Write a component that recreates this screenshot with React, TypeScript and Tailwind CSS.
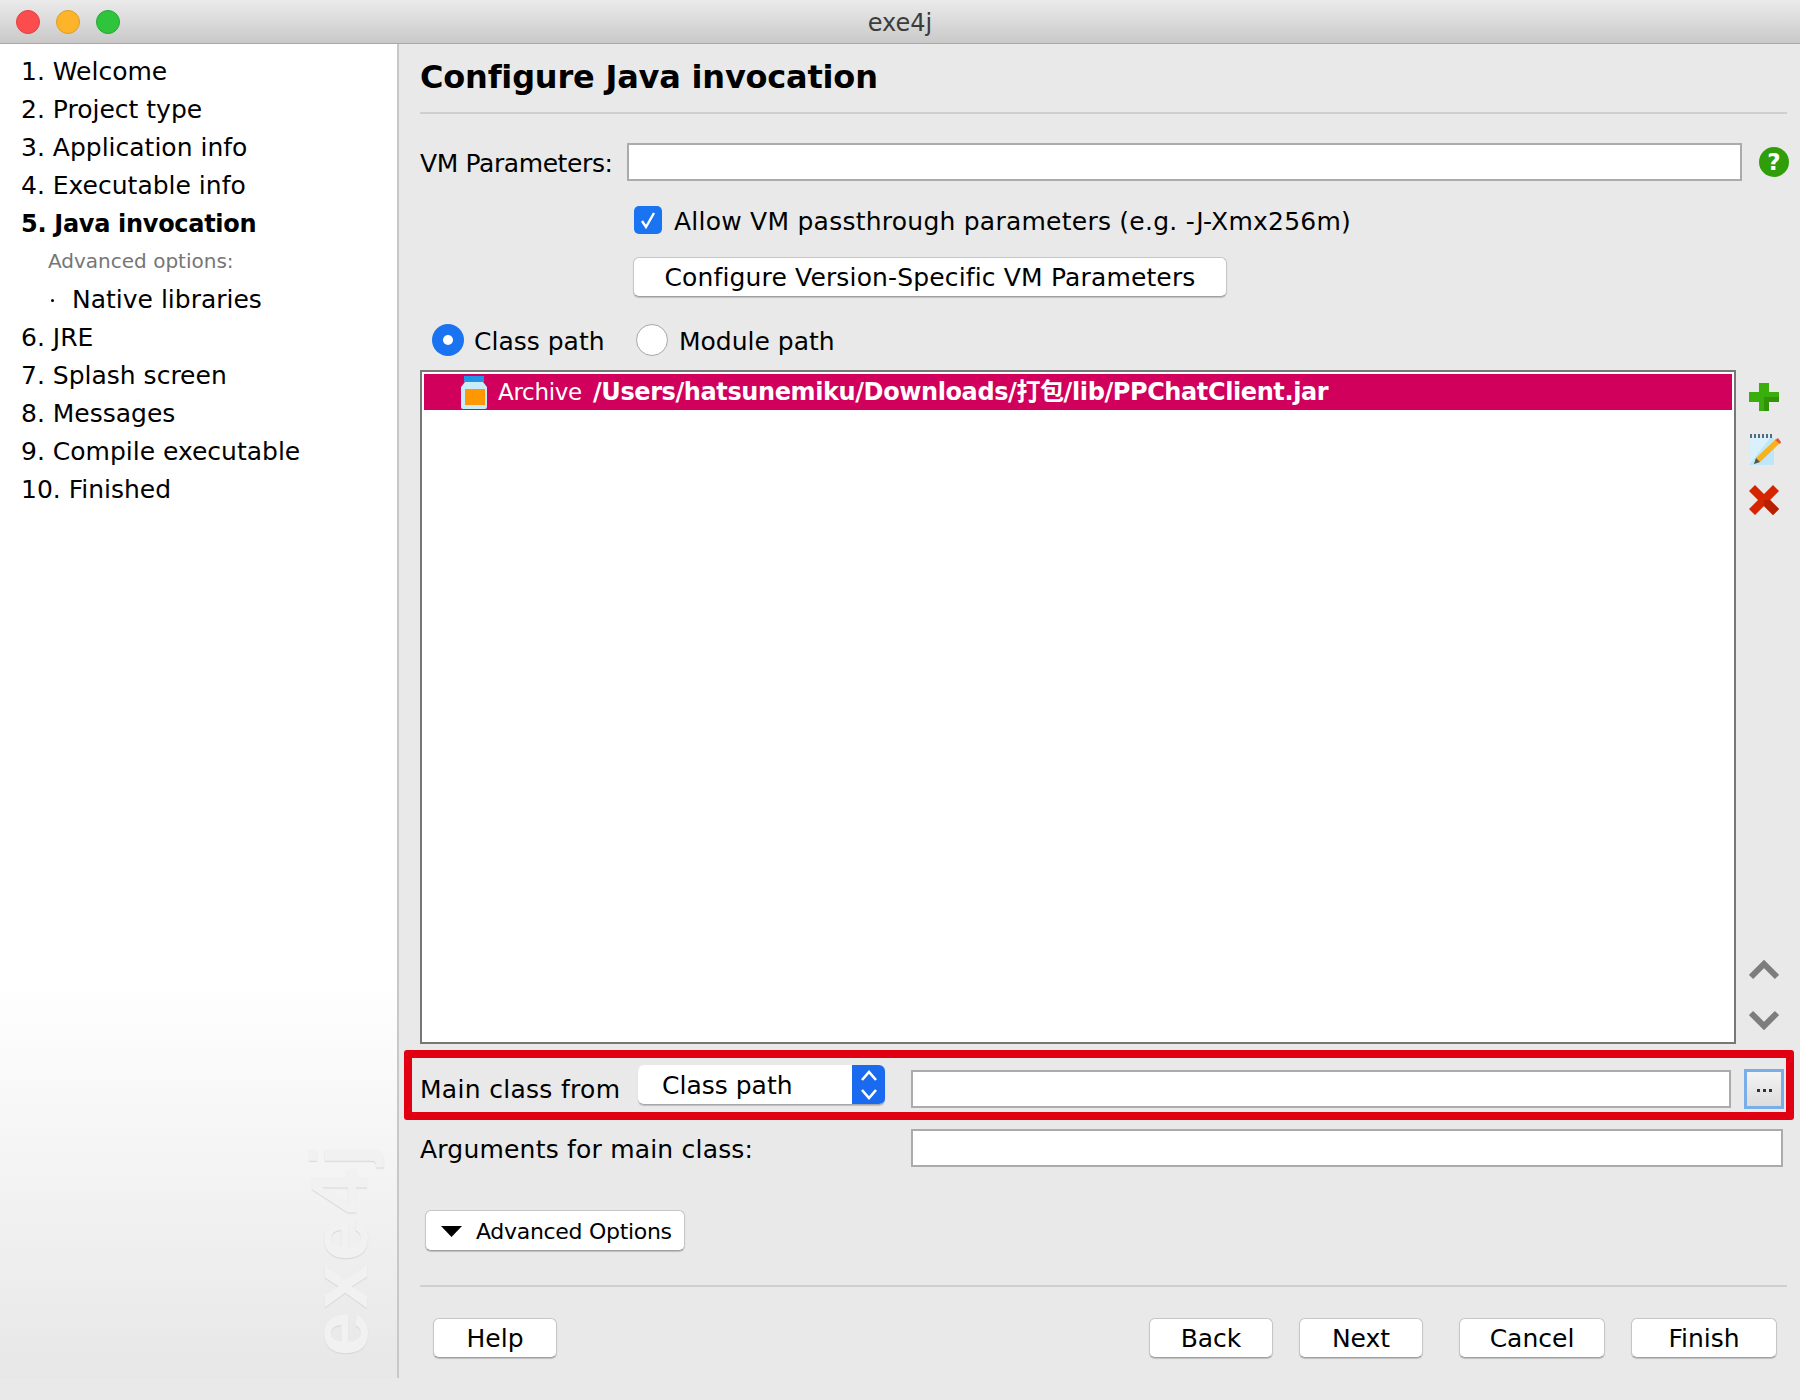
const cjk = '"DejaVu Sans", "Noto Sans CJK SC", sans-serif';

const steps = [
  { label: "1. Welcome" },
  { label: "2. Project type" },
  { label: "3. Application info" },
  { label: "4. Executable info" },
  { label: "5. Java invocation", bold: true },
  { label: "Advanced options:", sub: true },
  { label: "Native libraries", child: true },
  { label: "6. JRE" },
  { label: "7. Splash screen" },
  { label: "8. Messages" },
  { label: "9. Compile executable" },
  { label: "10. Finished" },
];

const buttonCls =
  "flex items-center rounded-[6px] border border-[#c6c6c6] border-b-[#a0a0a0] bg-white pt-[2px] text-black shadow-[0_1px_1px_rgba(0,0,0,0.18)]";
const wizardBtnCls = buttonCls + " h-[40px] justify-center text-[25px]";
const fieldCls = "h-[38px] border-2 border-[#ababab] bg-white";

function Sidebar() {
  return (
    <aside className="relative h-[1334px] w-[399px] shrink-0 border-r-2 border-[#c8c8c8] bg-[linear-gradient(180deg,#ffffff_0%,#ffffff_70%,#e7e7e7_100%)] pl-[21px] pt-[9px]">
      {steps.map((s) => (
        <div
          key={s.label}
          className={
            "flex h-[38px] items-center whitespace-nowrap " +
            (s.bold ? "text-[24px] font-bold tracking-[-0.3px] text-black " : "") +
            (s.sub ? "pb-[2px] pl-[27px] text-[20px] text-[#767676] " : "text-black ") +
            (s.child ? "pl-[30px] " : "")
          }
        >
          {s.child ? <span className="mr-[18px] h-[3px] w-[3px] rounded-full bg-black" /> : null}
          {s.label}
        </div>
      ))}
      <div className="absolute left-[301px] top-[1097px] rotate-180 font-['Liberation_Sans'] text-[80px] font-bold leading-[78px] tracking-[3px] text-[#f1f1f1] [text-shadow:-1px_0_1px_#d4d4d4] [writing-mode:vertical-rl]">
        exe4j
      </div>
    </aside>
  );
}

function JarIcon() {
  return (
    <svg width="26" height="33" viewBox="0 0 26 33" className="shrink-0">
      <rect x="3" y="0" width="20" height="6" fill="#2196e8" />
      <path d="M4 6h18l4 5v20a2 2 0 0 1-2 2H2a2 2 0 0 1-2-2V11z" fill="#c9ecfb" />
      <rect x="4" y="13" width="20" height="16" fill="#ff9800" />
    </svg>
  );
}

function PlusIcon() {
  return (
    <svg width="30" height="30" viewBox="0 0 30 30">
      <path d="M10 1h10v9h10v10H20v9H10v-9H0V10h10z" fill="#3aae0c" />
      <path d="M15 15h15v5H20v9h-5z" fill="#2f9408" />
    </svg>
  );
}

function EditIcon() {
  return (
    <svg width="33" height="33" viewBox="0 0 33 33">
      <path d="M1 32 L2 5 H26 V32Z" fill="#bfe6fb" />
      <path d="M1 32 L2 5 H22 Z" fill="#d8f1fc" />
      <path d="M3 1v4M7 1v4M11 1v4M15 1v4M19 1v4M23 1v4" stroke="#4b6f86" strokeWidth="2" />
      <path d="M28 6l4 4-20 19-6 2 2-6z" fill="#f7b21c" />
      <path d="M27 7l5 4 1-2-3-4z" fill="#f0562a" />
      <path d="M8 25l4 4-6 2z" fill="#455a64" />
    </svg>
  );
}

function CrossIcon() {
  return (
    <svg width="30" height="30" viewBox="0 0 30 30">
      <path d="M6 0l9 9 9-9 6 6-9 9 9 9-6 6-9-9-9 9-6-6 9-9-9-9z" fill="#d42400" />
      <path d="M15 15l6 0 9 9-6 6-9-9z" fill="#b81e00" />
    </svg>
  );
}

function ChevronIcon({ down }: { down?: boolean }) {
  return (
    <svg width="30" height="20" viewBox="0 0 30 20">
      <path
        d={down ? "M2 3l13 13L28 3" : "M2 17L15 4l13 13"}
        fill="none"
        stroke="#7d7d7d"
        strokeWidth="6"
      />
    </svg>
  );
}

function HelpIcon() {
  return (
    <div className="flex h-[30px] w-[30px] items-center justify-center rounded-full bg-[#2f9e08] text-[23px] font-bold leading-none text-white">
      ?
    </div>
  );
}

function Main() {
  return (
    <main className="h-[1334px] flex-1 pl-[21px]">
      <div className="mr-[13px] flex h-[70px] items-start border-b-2 border-[#cfcfcf] pt-[13px]">
        <h1 className="text-[32px] font-bold leading-[40px] tracking-[-0.2px] text-black">
          Configure Java invocation
        </h1>
      </div>

      <div className="mt-[29px] flex h-[38px] items-center">
        <span className="w-[207px] pt-[3px] tracking-[-0.4px]">VM Parameters:</span>
        <div className={"w-[1115px] " + fieldCls} />
        <div className="ml-[17px]">
          <HelpIcon />
        </div>
      </div>

      <div className="mt-[25px] flex h-[28px] items-center pl-[214px]">
        <div className="flex h-[28px] w-[28px] items-center justify-center rounded-[5px] bg-[#1a73f0]">
          <svg width="20" height="22" viewBox="0 0 20 22">
            <path d="M4 12l4 6 8-14" fill="none" stroke="#fff" strokeWidth="2.4" />
          </svg>
        </div>
        <span className="ml-[12px] whitespace-nowrap pt-[3px] tracking-[0.24px]">
          Allow VM passthrough parameters (e.g. -J-Xmx256m)
        </span>
      </div>

      <div className="mt-[23px] pl-[213px]">
        <button className={wizardBtnCls + " w-[594px] tracking-[0.15px]"}>
          Configure Version-Specific VM Parameters
        </button>
      </div>

      <div className="mt-[27px] flex h-[32px] items-center pl-[12px]">
        <div className="flex h-[32px] w-[32px] items-center justify-center rounded-full bg-[#1a73f0]">
          <div className="h-[10px] w-[10px] rounded-full bg-white" />
        </div>
        <span className="ml-[10px] w-[162px] whitespace-nowrap pt-[3px]">Class path</span>
        <div className="h-[32px] w-[32px] rounded-full border border-[#a8a8a8] bg-white" />
        <span className="ml-[11px] whitespace-nowrap pt-[3px]">Module path</span>
      </div>

      <div className="mt-[14px] flex">
        <div className="h-[674px] w-[1316px] border-2 border-[#777777] bg-white p-[2px]">
          <div className="flex h-[36px] items-center bg-[#d0005c] pl-[37px] text-white">
            <JarIcon />
            <span className="ml-[11px] text-[23px] tracking-[-0.3px]">Archive</span>
            <span className="ml-[11px] whitespace-nowrap text-[24px] font-bold tracking-[-0.4px]">
              /Users/hatsunemiku/Downloads/打包/lib/PPChatClient.jar
            </span>
          </div>
        </div>
        <div className="ml-[12px] flex w-[32px] flex-col items-center pt-[12px]">
          <PlusIcon />
          <div className="mt-[21px]">
            <EditIcon />
          </div>
          <div className="mt-[19px]">
            <CrossIcon />
          </div>
          <div className="mt-[445px]">
            <ChevronIcon />
          </div>
          <div className="mt-[30px]">
            <ChevronIcon down />
          </div>
        </div>
      </div>

      <div className="ml-[-16px] mt-[6px] flex h-[70px] w-[1390px] items-center rounded-[3px] border-8 border-[#e00012] pl-[8px]">
        <span className="w-[218px] whitespace-nowrap pt-[10px] tracking-[0.3px]">Main class from</span>
        <div className="flex h-[40px] w-[247px] items-stretch overflow-hidden rounded-[6px] border-b border-[#a8a8a8] bg-white shadow-[0_1px_1px_rgba(0,0,0,0.18)]">
          <span className="flex-1 pl-[24px] pt-[1px] leading-[40px]">Class path</span>
          <div className="flex w-[33px] items-center justify-center bg-[#1a6af0]">
            <svg width="20" height="34" viewBox="0 0 20 34">
              <path d="M3 12l7-8 7 8M3 22l7 8 7-8" fill="none" stroke="#fff" strokeWidth="2.6" />
            </svg>
          </div>
        </div>
        <div className={"ml-[26px] mt-[8px] w-[820px] " + fieldCls} />
        <div className="ml-[13px] mt-[8px] flex h-[40px] w-[40px] items-center justify-center gap-[3px] border-[3px] border-[#7aaee8] bg-[linear-gradient(180deg,#f4f4f4,#dcdcdc)] pt-[2px]">
          <span className="h-[3px] w-[3px] bg-[#333333]" />
          <span className="h-[3px] w-[3px] bg-[#333333]" />
          <span className="h-[3px] w-[3px] bg-[#333333]" />
        </div>
      </div>

      <div className="mt-[9px] flex h-[38px] items-center">
        <span className="w-[491px] whitespace-nowrap pt-[3px] tracking-[0.2px]">Arguments for main class:</span>
        <div className={"w-[872px] " + fieldCls} />
      </div>

      <div className="ml-[5px] mt-[43px]">
        <button className={buttonCls + " h-[41px] w-[260px] justify-start whitespace-nowrap pl-[15px] text-[22px] tracking-[-0.3px]"}>
          <svg width="21" height="11" viewBox="0 0 21 11" className="shrink-0">
            <path d="M0 0h21L10.500 11z" fill="#000" />
          </svg>
          <span className="ml-[14px]">Advanced Options</span>
        </button>
      </div>

      <div className="mr-[13px] mt-[34px] h-[2px] bg-[#cfcfcf]" />

      <div className="mt-[31px] flex pl-[13px]">
        <button className={wizardBtnCls + " w-[124px]"}>Help</button>
        <button className={wizardBtnCls + " ml-[592px] w-[124px]"}>Back</button>
        <button className={wizardBtnCls + " ml-[26px] w-[124px]"}>Next</button>
        <button className={wizardBtnCls + " ml-[36px] w-[146px]"}>Cancel</button>
        <button className={wizardBtnCls + " ml-[26px] w-[146px]"}>Finish</button>
      </div>
    </main>
  );
}

export default function App() {
  return (
    <div
      className="flex h-[1400px] w-[1800px] flex-col overflow-hidden bg-[#e9e9e9] text-[25px] text-black"
      style={{ fontFamily: cjk }}
    >
      <header className="relative flex h-[44px] shrink-0 items-center justify-center border-b border-[#a8a8a8] bg-[linear-gradient(180deg,#ebebeb,#c9c9c9)]">
        <div className="absolute left-[16px] top-[10px] flex gap-[16px]">
          <span className="h-[24px] w-[24px] rounded-full border border-[#e04040] bg-[#fc4c4e]" />
          <span className="h-[24px] w-[24px] rounded-full border border-[#e09e20] bg-[#fdb32a]" />
          <span className="h-[24px] w-[24px] rounded-full border border-[#25a832] bg-[#2ec43c]" />
        </div>
        <span className="pt-[2px] text-[24px] text-[#3c3c3c]">exe4j</span>
      </header>
      <div className="flex">
        <Sidebar />
        <Main />
      </div>
    </div>
  );
}
